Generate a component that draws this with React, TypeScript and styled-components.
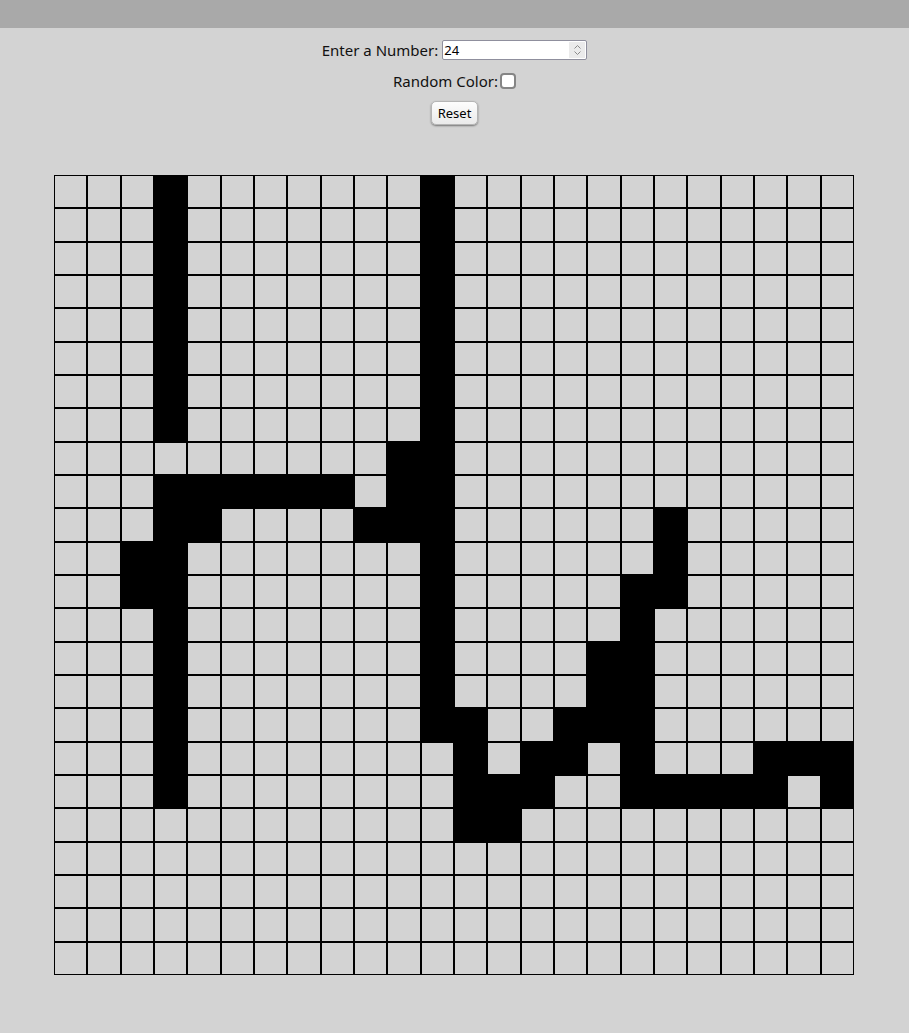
import React from "react";
import styled, { createGlobalStyle } from "styled-components";

const GlobalStyle = createGlobalStyle`
  html, body {
    margin: 0;
    padding: 0;
    background: #d3d3d3;
  }
  body {
    font-family: "Noto Sans", "Open Sans", sans-serif;
  }
`;

const Page = styled.div`
  min-height: 1033px;
  background: #d3d3d3;
  display: flex;
  flex-direction: column;
  align-items: center;
`;

const TopBar = styled.header`
  align-self: stretch;
  height: 28px;
  background: #a9a9a9;
`;

const Controls = styled.div`
  display: flex;
  flex-direction: column;
  align-items: center;
  padding-top: 12px;
`;

const Row = styled.div<{ $h: number; $mt?: number }>`
  display: flex;
  align-items: center;
  height: ${(p) => p.$h}px;
  margin-top: ${(p) => p.$mt ?? 0}px;
`;

const Label = styled.label<{ $gap?: number }>`
  font-family: "Noto Sans", sans-serif;
  font-size: 15px;
  color: #111;
  margin-right: ${(p) => p.$gap ?? 4}px;
  white-space: nowrap;
`;

const NumberBox = styled.div`
  display: flex;
  align-items: stretch;
  width: 145px;
  height: 20px;
  box-sizing: border-box;
  border: 1px solid #8f8f9d;
  border-radius: 2px;
  background: #fff;
`;

const NumberInput = styled.input`
  flex: 1;
  min-width: 0;
  border: none;
  outline: none;
  padding: 0 1px;
  margin: 0;
  font-family: "Noto Sans", sans-serif;
  font-size: 13px;
  color: #000;
  background: transparent;
  -moz-appearance: textfield;
  &::-webkit-inner-spin-button,
  &::-webkit-outer-spin-button {
    -webkit-appearance: none;
    margin: 0;
  }
`;

const Spinner = styled.div`
  width: 16px;
  margin: 1px;
  background: #ebebeb;
  display: flex;
  flex-direction: column;
  align-items: center;
  justify-content: center;
  gap: 2px;
`;

const Checkbox = styled.input`
  appearance: none;
  -webkit-appearance: none;
  width: 16px;
  height: 16px;
  margin: 0 0 0 2px;
  box-sizing: border-box;
  border: 2px solid #858585;
  border-radius: 4px;
  background: #fff;
`;

const ResetButton = styled.button`
  font-family: "Noto Sans", sans-serif;
  font-size: 13px;
  color: #000;
  height: 24px;
  width: 47px;
  padding: 0;
  border: 1px solid #b5b5b5;
  border-radius: 5px;
  background: linear-gradient(#fdfdfd, #eaeaea);
  box-shadow: 0 1px 2px rgba(0, 0, 0, 0.45);
`;

const Board = styled.div`
  margin-top: 50px;
  margin-right: 1px;
  width: 800px;
  height: 800px;
  display: grid;
  grid-template-columns: repeat(24, 1fr);
  grid-template-rows: repeat(24, 1fr);
`;

const Cell = styled.div<{ $on: boolean }>`
  box-sizing: border-box;
  border: 1px solid #000;
  background: ${(p) => (p.$on ? "#000" : "#d3d3d3")};
`;

const filled: Record<number, number[]> = {
  0: [3, 11],
  1: [3, 11],
  2: [3, 11],
  3: [3, 11],
  4: [3, 11],
  5: [3, 11],
  6: [3, 11],
  7: [3, 11],
  8: [10, 11],
  9: [3, 4, 5, 6, 7, 8, 10, 11],
  10: [3, 4, 9, 10, 11, 18],
  11: [2, 3, 11, 18],
  12: [2, 3, 11, 17, 18],
  13: [3, 11, 17],
  14: [3, 11, 16, 17],
  15: [3, 11, 16, 17],
  16: [3, 11, 12, 15, 16, 17],
  17: [3, 12, 14, 15, 17, 21, 22, 23],
  18: [3, 12, 13, 14, 17, 18, 19, 20, 21, 23],
  19: [12, 13],
};

const Chevron = ({ up }: { up: boolean }) => (
  <svg width="7" height="4" viewBox="0 0 7 4">
    <path
      d={up ? "M0.5 3.5 L3.5 0.5 L6.5 3.5" : "M0.5 0.5 L3.5 3.5 L6.5 0.5"}
      fill="none"
      stroke="#8a8a8a"
      strokeWidth="1"
    />
  </svg>
);

export default function App() {
  const cells = [];
  for (let r = 0; r < 24; r++) {
    for (let c = 0; c < 24; c++) {
      cells.push(<Cell key={`${r}-${c}`} $on={(filled[r] || []).includes(c)} />);
    }
  }
  return (
    <>
      <GlobalStyle />
      <Page>
        <TopBar />
        <Controls>
          <Row $h={20}>
            <Label htmlFor="num">Enter a Number:</Label>
            <NumberBox>
              <NumberInput id="num" type="number" defaultValue={24} />
              <Spinner>
                <Chevron up />
                <Chevron up={false} />
              </Spinner>
            </NumberBox>
          </Row>
          <Row $h={22} $mt={10}>
            <Label htmlFor="rc" $gap={0}>Random Color:</Label>
            <Checkbox id="rc" type="checkbox" />
          </Row>
          <Row $h={24} $mt={9}>
            <ResetButton>Reset</ResetButton>
          </Row>
        </Controls>
        <Board>{cells}</Board>
      </Page>
    </>
  );
}
